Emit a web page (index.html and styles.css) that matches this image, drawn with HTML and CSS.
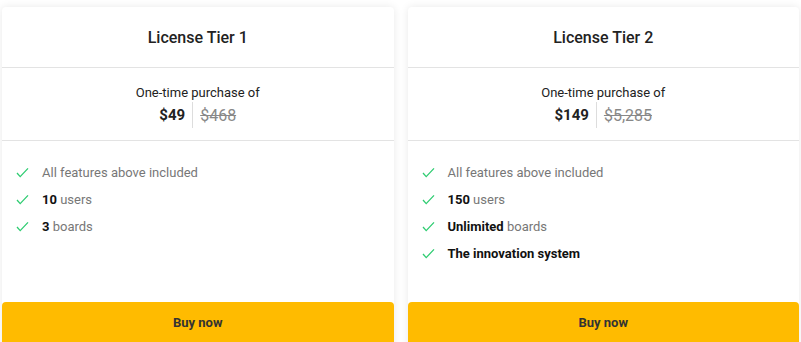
FILE: index.html
```html
<!DOCTYPE html>
<html lang="en">
  <head>
    <meta charset="UTF-8" />
    <meta name="viewport" content="width=device-width, initial-scale=1.0" />
    <title>License Tiers</title>

    <link rel="stylesheet" href="styles.css">
  </head>

  <body>
    <div class="tiers">
      <!-- Tier 1 -->
      <div class="card">
        <div class="card-head">License Tier 1</div>

        <div class="card-price">
          <p class="price-label">One-time purchase of</p>
          <div class="price-row">
            <span class="price-now">$49</span>
            <span class="price-old">$468</span>
          </div>
        </div>

        <ul class="features">
          <li>
            <svg class="check" viewBox="0 0 14 12"><path d="M1 6.5l3.5 4L13 1.5" /></svg>
            <span>All features above included</span>
          </li>
          <li>
            <svg class="check" viewBox="0 0 14 12"><path d="M1 6.5l3.5 4L13 1.5" /></svg>
            <span><b>10</b> users</span>
          </li>
          <li>
            <svg class="check" viewBox="0 0 14 12"><path d="M1 6.5l3.5 4L13 1.5" /></svg>
            <span><b>3</b> boards</span>
          </li>
        </ul>

        <button class="buy">Buy now</button>
      </div>

      <!-- Tier 2 -->
      <div class="card">
        <div class="card-head">License Tier 2</div>

        <div class="card-price">
          <p class="price-label">One-time purchase of</p>
          <div class="price-row">
            <span class="price-now">$149</span>
            <span class="price-old">$5,285</span>
          </div>
        </div>

        <ul class="features">
          <li>
            <svg class="check" viewBox="0 0 14 12"><path d="M1 6.5l3.5 4L13 1.5" /></svg>
            <span>All features above included</span>
          </li>
          <li>
            <svg class="check" viewBox="0 0 14 12"><path d="M1 6.5l3.5 4L13 1.5" /></svg>
            <span><b>150</b> users</span>
          </li>
          <li>
            <svg class="check" viewBox="0 0 14 12"><path d="M1 6.5l3.5 4L13 1.5" /></svg>
            <span><b>Unlimited</b> boards</span>
          </li>
          <li>
            <svg class="check" viewBox="0 0 14 12"><path d="M1 6.5l3.5 4L13 1.5" /></svg>
            <span><b>The innovation system</b></span>
          </li>
        </ul>

        <button class="buy">Buy now</button>
      </div>
    </div>
  </body>
</html>
```

FILE: styles.css
```css
body {
  margin: 0;
  font-family: Roboto, "Liberation Sans", sans-serif;
  background-color: #fff;
  color: #222;
  overflow: hidden;
}

.tiers {
  display: grid;
  grid-template-columns: 1fr 1fr;
  gap: 14px;
  padding: 7px 2px 0;
}

.card {
  background-color: #fff;
  border-radius: 4px;
  box-shadow: 0 0 8px rgba(0, 0, 0, 0.09);
  display: flex;
  flex-direction: column;
  height: 380px;
}

.card-head {
  height: 60px;
  display: flex;
  align-items: center;
  justify-content: center;
  font-size: 16px;
  font-weight: 500;
  border-bottom: 1px solid #e3e3e3;
}

.card-price {
  height: 73px;
  box-sizing: border-box;
  padding-top: 16px;
  border-bottom: 1px solid #e3e3e3;
  text-align: center;
}

.price-label {
  margin: 0;
  font-size: 13px;
  line-height: 18px;
}

.price-row {
  display: flex;
  justify-content: center;
  align-items: center;
  height: 26px;
}

.price-now {
  font-size: 15px;
  font-weight: 700;
  padding-right: 7px;
  line-height: 26px;
  border-right: 1px solid #ddd;
}

.price-old {
  font-size: 16px;
  color: #888;
  text-decoration: line-through;
  padding-left: 7px;
}

.features {
  list-style: none;
  margin: 0;
  padding: 18px 0 0 14px;
  height: 161px;
  box-sizing: border-box;
}

.features li {
  display: flex;
  align-items: center;
  height: 27px;
  font-size: 13px;
  color: #777;
}

.features b {
  color: #111;
  font-weight: 700;
}

.check {
  width: 13px;
  height: 11px;
  margin-right: 13px;
  fill: none;
  stroke: #2ecc71;
  stroke-width: 1.4;
}

.buy {
  height: 44px;
  border: none;
  border-radius: 4px 4px 0 0;
  background-color: #ffbb00;
  color: #333;
  font-family: inherit;
  font-size: 13px;
  font-weight: 700;
  padding: 0 0 4px;
}
```
